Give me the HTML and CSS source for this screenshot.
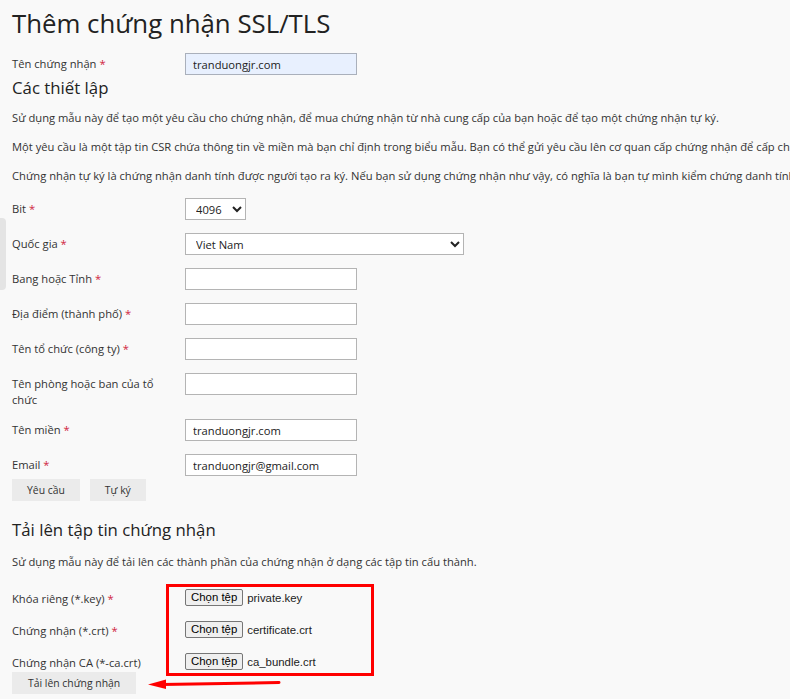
FILE: index.html
```html
<!DOCTYPE html>
<html lang="vi">
<head>
<meta charset="utf-8">
<title>Thêm chứng nhận SSL/TLS</title>
<link rel="stylesheet" href="styles.css">
</head>
<body>
<div class="side-handle"></div>
<main class="page">
  <h1 class="page-title">Thêm chứng nhận SSL/TLS</h1>

  <div class="field field-first">
    <label class="field-label">Tên chứng nhận <span class="req">*</span></label>
    <input class="text-input autofill" type="text" value="tranduongjr.com">
  </div>

  <h2 class="section-title section-settings">Các thiết lập</h2>
  <p class="hint">Sử dụng mẫu này để tạo một yêu cầu cho chứng nhận, để mua chứng nhận từ nhà cung cấp của bạn hoặc để tạo một chứng nhận tự ký.</p>
  <p class="hint">Một yêu cầu là một tập tin CSR chứa thông tin về miền mà bạn chỉ định trong biểu mẫu. Bạn có thể gửi yêu cầu lên cơ quan cấp chứng nhận để cấp chứng nhận cho bạn.</p>
  <p class="hint">Chứng nhận tự ký là chứng nhận danh tính được người tạo ra ký. Nếu bạn sử dụng chứng nhận như vậy, có nghĩa là bạn tự mình kiểm chứng danh tính của mình.</p>

  <div class="fields">
    <div class="field">
      <label class="field-label">Bit <span class="req">*</span></label>
      <select class="select select-bits"><option>4096</option></select>
    </div>
    <div class="field">
      <label class="field-label">Quốc gia <span class="req">*</span></label>
      <select class="select select-country"><option>Viet Nam</option></select>
    </div>
    <div class="field">
      <label class="field-label">Bang hoặc Tỉnh <span class="req">*</span></label>
      <input class="text-input" type="text">
    </div>
    <div class="field">
      <label class="field-label">Địa điểm (thành phố) <span class="req">*</span></label>
      <input class="text-input" type="text">
    </div>
    <div class="field">
      <label class="field-label">Tên tổ chức (công ty) <span class="req">*</span></label>
      <input class="text-input" type="text">
    </div>
    <div class="field field-multi">
      <label class="field-label">Tên phòng hoặc ban của tổ chức</label>
      <input class="text-input" type="text">
    </div>
    <div class="field">
      <label class="field-label">Tên miền <span class="req">*</span></label>
      <input class="text-input" type="text" value="tranduongjr.com">
    </div>
    <div class="field">
      <label class="field-label">Email <span class="req">*</span></label>
      <input class="text-input" type="text" value="tranduongjr@gmail.com">
    </div>
  </div>

  <div class="actions">
    <button class="btn" type="button">Yêu cầu</button>
    <button class="btn" type="button">Tự ký</button>
  </div>

  <h2 class="section-title section-upload">Tải lên tập tin chứng nhận</h2>
  <p class="hint hint-upload">Sử dụng mẫu này để tải lên các thành phần của chứng nhận ở dạng các tập tin cấu thành.</p>

  <div class="upload-fields">
    <div class="upload-row">
      <label class="field-label">Khóa riêng (*.key) <span class="req">*</span></label>
      <span class="file-btn">Chọn tệp</span><span class="file-name">private.key</span>
    </div>
    <div class="upload-row">
      <label class="field-label">Chứng nhận (*.crt) <span class="req">*</span></label>
      <span class="file-btn">Chọn tệp</span><span class="file-name">certificate.crt</span>
    </div>
    <div class="upload-row">
      <label class="field-label">Chứng nhận CA (*-ca.crt)</label>
      <span class="file-btn">Chọn tệp</span><span class="file-name">ca_bundle.crt</span>
    </div>
    <div class="mark-box"></div>
  </div>

  <div class="submit-row">
    <button class="btn btn-upload" type="button">Tải lên chứng nhận</button>
    <svg class="mark-arrow" width="140" height="16" viewBox="0 0 140 16">
      <line x1="14" y1="8.5" x2="131" y2="6.5" stroke="#f00" stroke-width="3" stroke-linecap="round"/>
      <polygon points="0,8.5 18,3.5 18,13" fill="#f00"/>
    </svg>
  </div>

  <h2 class="section-title section-text">Tải lên chứng nhận ở dạng văn bản để kiểm tra</h2>
</main>
</body>
</html>
```

FILE: styles.css
```css
html, body {
  overflow: hidden;
}
body {
  margin: 0;
  background: #f9f9f9;
  font-family: "Open Sans", "Noto Sans", sans-serif;
  font-size: 11.2px;
  color: #333;
}
.side-handle {
  position: fixed;
  left: 0;
  top: 218px;
  width: 6px;
  height: 72px;
  background: #e4e4e4;
  border-radius: 0 4px 4px 0;
}
.page {
  padding: 6px 12px 0;
}
.page-title {
  margin: 0;
  font-size: 25.8px;
  line-height: 34px;
  font-weight: 400;
  color: #222;
}
.section-title {
  margin: 0;
  font-size: 16.8px;
  line-height: 22px;
  font-weight: 400;
  color: #222;
  white-space: nowrap;
}
.section-settings { margin-top: 2px; }
.section-upload { margin-top: 18px; }
.section-text { margin-top: 24px; }
.hint {
  margin: 10px 0 0;
  line-height: 17px;
  white-space: nowrap;
}
.hint + .hint { margin-top: 12px; }
.hint-upload { margin-top: 12px; }
.req { color: #d0263f; }

.field {
  display: flex;
  align-items: center;
}
.field-first { margin-top: 13px; }
.field-label {
  flex: 0 0 158px;
  margin-right: 15px;
  line-height: 16px;
}
.fields {
  margin-top: 14px;
  display: flex;
  flex-direction: column;
  gap: 13px;
}
.field-multi {
  align-items: flex-start;
  margin-bottom: -2px;
}
.field-multi .field-label { padding-top: 3px; }

.text-input {
  box-sizing: border-box;
  width: 172px;
  height: 22px;
  margin: 0;
  padding: 0 7px;
  border: 1px solid #b4b4b4;
  border-radius: 0;
  background: #fff;
  font-family: "Open Sans", sans-serif;
  font-size: 11.2px;
  color: #222;
  outline: none;
}
.text-input.autofill {
  background: #e8f0fe;
  border-color: #aab0bb;
}
.select {
  box-sizing: border-box;
  height: 22px;
  margin: 0;
  padding: 0 4px 0 6px;
  border: 1px solid #b4b4b4;
  border-radius: 0;
  background: #fff;
  font-family: "Open Sans", sans-serif;
  font-size: 11.2px;
  color: #222;
}
.select-bits { width: 61px; }
.select-country { width: 279px; }

.actions {
  margin-top: 3px;
  display: flex;
  gap: 10px;
}
.btn {
  height: 22px;
  margin: 0;
  padding: 0 15px;
  border: none;
  border-radius: 0;
  background: #ebebeb;
  font-family: "Open Sans", sans-serif;
  font-size: 10.4px;
  color: #333;
}

.upload-fields {
  position: relative;
  margin-top: 20px;
  display: flex;
  flex-direction: column;
  gap: 15px;
}
.upload-row {
  display: flex;
  align-items: center;
  height: 17px;
}
.upload-row .field-label { line-height: 17px; }
.file-btn {
  box-sizing: border-box;
  height: 17px;
  padding: 0 5px;
  border: 1px solid #767676;
  border-radius: 2px;
  background: #efefef;
  font-family: "Liberation Sans", Arial, sans-serif;
  font-size: 11.4px;
  line-height: 15px;
  color: #000;
  margin-top: -2px;
}
.file-name {
  margin-left: 4px;
  font-family: "Liberation Sans", Arial, sans-serif;
  font-size: 11.4px;
  color: #222;
  margin-top: -2px;
}
.mark-box {
  position: absolute;
  left: 154px;
  top: -6px;
  width: 208px;
  height: 92px;
  box-sizing: border-box;
  border: 3px solid #f00;
}

.submit-row {
  position: relative;
  margin-top: 1px;
}
.btn-upload { padding: 0 16px; }
.mark-arrow {
  position: absolute;
  left: 136px;
  top: 4px;
}
```
